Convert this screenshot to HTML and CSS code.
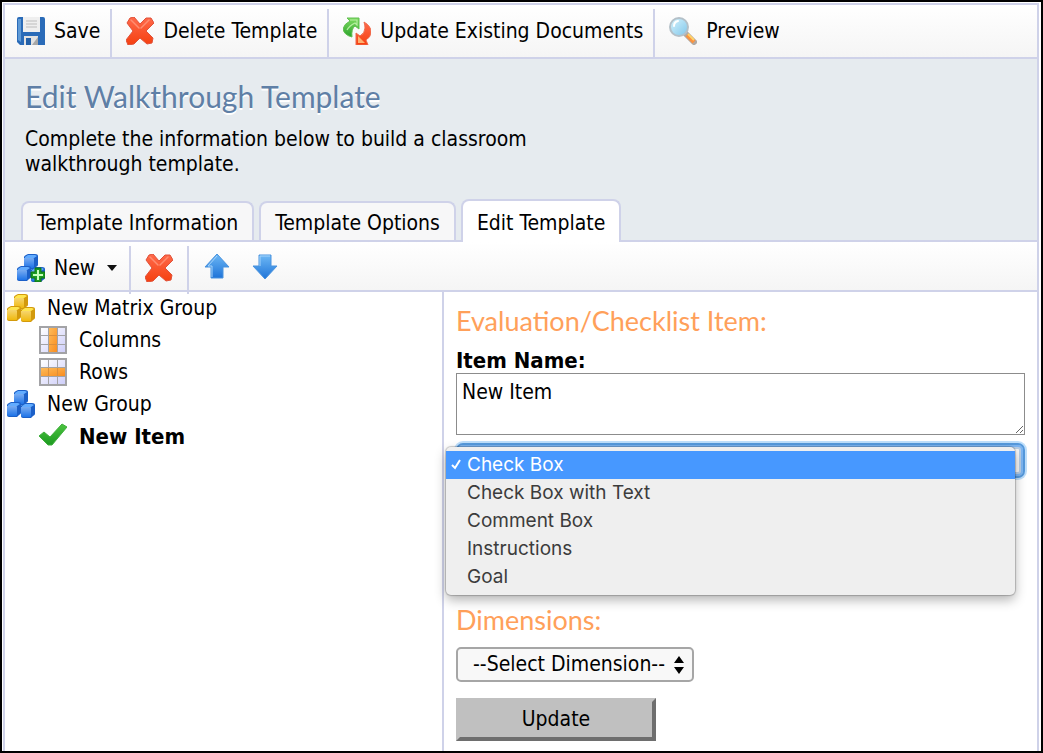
FILE: index.html
```
<!DOCTYPE html>
<html lang="en">
<head>
    <meta charset="UTF-8">
    <meta name="viewport" content="width=device-width, initial-scale=1.0">
    <title>Edit Walkthrough Template</title>
    <link rel="stylesheet" href="styles.css">
</head>

<body>
    <!-- shared gradients and icon shapes -->
    <svg class="defs" width="0" height="0" aria-hidden="true">
        <defs>
            <linearGradient id="red" x1="0" y1="0" x2="0" y2="1">
                <stop offset="0" stop-color="#ff6a4c"/>
                <stop offset="1" stop-color="#f5400f"/>
            </linearGradient>
            <linearGradient id="blue" x1="0" y1="0" x2="0" y2="1">
                <stop offset="0" stop-color="#6db8f5"/>
                <stop offset="1" stop-color="#1f74d8"/>
            </linearGradient>
            <linearGradient id="green" x1="0" y1="0" x2="0" y2="1">
                <stop offset="0" stop-color="#7fdc62"/>
                <stop offset="1" stop-color="#2ba32c"/>
            </linearGradient>
            <linearGradient id="tick" x1="0" y1="0" x2="0" y2="1">
                <stop offset="0" stop-color="#4cc440"/>
                <stop offset="1" stop-color="#1c9a20"/>
            </linearGradient>
            <linearGradient id="orange" x1="0" y1="0" x2="1" y2="1">
                <stop offset="0" stop-color="#fdbb5a"/>
                <stop offset="1" stop-color="#f98d20"/>
            </linearGradient>
            <linearGradient id="glass" x1="0" y1="0" x2="1" y2="1">
                <stop offset="0" stop-color="#d8f4fd"/>
                <stop offset="1" stop-color="#7fc6ea"/>
            </linearGradient>
            <linearGradient id="cell" x1="0" y1="0" x2="1" y2="1">
                <stop offset="0" stop-color="#ffffff"/>
                <stop offset="1" stop-color="#cfcffa"/>
            </linearGradient>
            <linearGradient id="shine" x1="0" y1="0" x2="0" y2="1">
                <stop offset="0" stop-color="#fff" stop-opacity="0.4"/>
                <stop offset="1" stop-color="#fff" stop-opacity="0"/>
            </linearGradient>
            <symbol id="icon-delete" viewBox="0 0 28 28">
                <path d="M4 1 8 0 14 7 20 1 25 1 28 6 20 14 27 21 26 26 21 27 14 21 8 27 2 28 0 23 7 14 1 6Z" fill="url(#red)" stroke="#e0523a" stroke-linejoin="round"/>
                <path d="M5 3 13 11M23 3 15 11" fill="none" stroke="#ff8d70" stroke-width="1.5" stroke-linecap="round"/>
            </symbol>
            <symbol id="cube" viewBox="0 0 15 15">
                <path class="cube-side" d="M1 3Q1 2 3 1L5 0H12Q15 0 15 2V11Q15 12 13 13L11 15H3Q1 15 1 13Z"/>
                <path class="cube-front" d="M1 4H10Q11 4 11 5V13Q11 14 10 14H3Q1 14 1 12Z"/>
                <path d="M1 4H10Q11 4 11 5V13Q11 14 10 14H3Q1 14 1 12Z" fill="url(#shine)"/>
                <path class="cube-top" d="M2 3 5 1H12L14 2 11 4H2Z"/>
            </symbol>
            <symbol id="icon-cubes" viewBox="0 0 28 28">
                <use href="#cube" x="6" y="0" width="15" height="15"/>
                <use href="#cube" x="-1" y="12" width="15" height="15"/>
                <use href="#cube" x="13" y="13" width="15" height="15"/>
            </symbol>
        </defs>
    </svg>

    <div class="app">
        <div class="toolbar main-toolbar">
            <button type="button" class="tool">
                <svg class="icon" viewBox="0 0 28 28" aria-hidden="true">
                    <path d="M0 2Q0 0 2 0H26Q28 0 28 2V28H3L0 25Z" fill="#2a6bb8"/>
                    <path d="M1 2H4V25L1 23Z" fill="#5f9ad6"/>
                    <path d="M6 0H23V15H6Z" fill="#efefef"/>
                    <path d="M9 4H20M9 7H20M9 10H20" stroke="#bdbdbd"/>
                    <path d="M7 19H21V28H7Z" fill="#e2e2e2"/>
                    <path d="M9 21H14V28H9Z" fill="#2360a8"/>
                    <path d="M15 28 21 20V28Z" fill="#a7a7a7"/>
                </svg>
                Save
            </button>
            <button type="button" class="tool">
                <svg class="icon" aria-hidden="true"><use href="#icon-delete"/></svg>
                Delete Template
            </button>
            <button type="button" class="tool">
                <svg class="icon" viewBox="0 0 28 28" aria-hidden="true">
                    <path d="M4 1H16V12L12 9Q8 12 9 20Q1 18 0 12Q1 7 7 4Z" fill="url(#green)" stroke="#63bf52"/>
                    <path d="M7 3H14V8L12 6Q6 9 4 13" fill="none" stroke="#b5efa0" stroke-width="1.2"/>
                    <path d="M21 5Q28 9 28 15Q28 20 23 23L25 28H13V16L17 19Q22 16 22 11Q22 8 21 5Z" fill="url(#red)" stroke="#ee6b4e"/>
                    <path d="M15 19V26H22L18 22Z" fill="#ffb070"/>
                </svg>
                Update Existing Documents
            </button>
            <button type="button" class="tool">
                <svg class="icon" viewBox="0 0 28 28" aria-hidden="true">
                    <path d="M17 17 25 25" stroke="#b0aaa4" stroke-width="6" stroke-linecap="round"/>
                    <path d="M18 18 25 25" stroke="#fb9340" stroke-width="4"/>
                    <path d="M19 17 25 23" stroke="#ffd26b" stroke-width="2"/>
                    <circle cx="10" cy="10" r="9" fill="url(#glass)" stroke="#b4c0c8" stroke-width="2"/>
                    <path d="M5 9Q5 5 9 4" fill="none" stroke="#fff" stroke-width="2" stroke-linecap="round"/>
                </svg>
                Preview
            </button>
        </div>

        <header class="page-header">
            <h1>Edit Walkthrough Template</h1>
            <p>Complete the information below to build a classroom walkthrough template.</p>
            <nav class="tabs">
                <a href="#information" class="tab">Template Information</a>
                <a href="#options" class="tab">Template Options</a>
                <a href="#edit" class="tab active" aria-current="page">Edit Template</a>
            </nav>
        </header>

        <div class="toolbar edit-toolbar">
            <button type="button" class="tool">
                <svg class="icon" viewBox="0 0 28 28" aria-hidden="true">
                    <use href="#icon-cubes" class="blue-cubes"/>
                    <path d="M18 14H24V18H28V24H24V28H18V24H14V18H18Z" fill="#1d9a24" stroke="#0b7413"/>
                    <path d="M21 16V26M16 21H26" stroke="#c9ffc0" stroke-width="2"/>
                </svg>
                New
                <span class="caret"></span>
            </button>
            <button type="button" class="tool" aria-label="Delete">
                <svg class="icon" aria-hidden="true"><use href="#icon-delete"/></svg>
            </button>
            <div class="arrows">
                <button type="button" class="arrow" aria-label="Move up">
                    <svg class="icon" viewBox="0 0 28 28" aria-hidden="true">
                        <path d="M14 2 26 15H20V26H8V15H2Z" fill="url(#blue)" stroke="#4a93de" stroke-linejoin="round"/>
                        <path d="M14 4 5 14H9V25" fill="none" stroke="#a5d4fb"/>
                    </svg>
                </button>
                <button type="button" class="arrow" aria-label="Move down">
                    <svg class="icon" viewBox="0 0 28 28" aria-hidden="true">
                        <path d="M14 27 2 14H8V3H20V14H26Z" fill="url(#blue)" stroke="#4a93de" stroke-linejoin="round"/>
                        <path d="M9 14V4H19" fill="none" stroke="#a5d4fb"/>
                    </svg>
                </button>
            </div>
        </div>

        <div class="content">
            <ul class="tree">
                <li class="node">
                    <svg class="icon gold-cubes" aria-hidden="true"><use href="#icon-cubes"/></svg>
                    New Matrix Group
                </li>
                <li class="node child">
                    <svg class="icon" viewBox="0 0 28 28" aria-hidden="true">
                        <path d="M0 0H28V28H0Z" fill="#a3a3a6"/>
                        <path d="M2 2H9V9H2ZM2 10H9V18H2ZM2 19H9V26H2ZM19 2H26V9H19ZM19 10H26V18H19ZM19 19H26V26H19Z" fill="url(#cell)"/>
                        <path d="M10 2H18V26H10Z" fill="url(#orange)"/>
                        <path d="M10 9.500H18M10 18.500H18" stroke="#dc8f3c"/>
                    </svg>
                    Columns
                </li>
                <li class="node child">
                    <svg class="icon" viewBox="0 0 28 28" aria-hidden="true">
                        <path d="M0 0H28V28H0Z" fill="#a3a3a6"/>
                        <path d="M2 2H9V9H2ZM10 2H18V9H10ZM19 2H26V9H19ZM2 19H9V26H2ZM10 19H18V26H10ZM19 19H26V26H19Z" fill="url(#cell)"/>
                        <path d="M2 10H26V18H2Z" fill="url(#orange)"/>
                        <path d="M9.500 10V18M18.500 10V18" stroke="#dc8f3c"/>
                    </svg>
                    Rows
                </li>
                <li class="node">
                    <svg class="icon blue-cubes" aria-hidden="true"><use href="#icon-cubes"/></svg>
                    New Group
                </li>
                <li class="node child selected">
                    <svg class="icon" viewBox="0 0 28 28" aria-hidden="true">
                        <path d="M0 14 5 10 11 15 23 2 28 5 13 23H9Z" fill="url(#tick)" stroke="#3fae3c" stroke-linejoin="round"/>
                    </svg>
                    New Item
                </li>
            </ul>

            <form class="editor">
                <h2>Evaluation/Checklist Item:</h2>
                <label for="itemName">Item Name:</label>
                <textarea id="itemName" rows="2">New Item</textarea>

                <div class="type-picker">
                    <select id="itemType" class="type-select" aria-label="Item type">
                        <option>Check Box</option>
                    </select>
                    <div class="menu" role="listbox" aria-label="Item types">
                        <button type="button" class="option chosen" role="option" aria-selected="true">
                            <svg class="check" viewBox="0 0 12 12" aria-hidden="true">
                                <path d="M2 7 5 10 10 2" fill="none" stroke="#fff" stroke-width="2"/>
                            </svg>
                            Check Box
                        </button>
                        <button type="button" class="option" role="option">Check Box with Text</button>
                        <button type="button" class="option" role="option">Comment Box</button>
                        <button type="button" class="option" role="option">Instructions</button>
                        <button type="button" class="option" role="option">Goal</button>
                    </div>
                </div>

                <h2>Dimensions:</h2>
                <div class="dimension">
                    <select id="dimension" aria-label="Dimension">
                        <option>--Select Dimension--</option>
                    </select>
                    <svg class="updown" viewBox="0 0 10 20" aria-hidden="true">
                        <path d="M5 1 10 8H0ZM5 19 0 12H10Z"/>
                    </svg>
                </div>
                <button type="button" class="update">Update</button>
            </form>
        </div>
    </div>
</body>

</html>
```
FILE: styles.css
```
* {
    box-sizing: border-box;
}

body {
    display: flex;
    margin: 0;
    min-height: 100vh;
    padding: 1px 2px 0 1px;
    border: 2px solid #000;
    background: #fff;
    color: #000;
    font-family: "DejaVu Sans Condensed", "Noto Sans", sans-serif;
    font-size: 21px;
    line-height: 25px;
}

button,
select,
textarea {
    font: inherit;
    color: inherit;
}

.defs {
    position: absolute;
}

.app {
    display: flex;
    flex-direction: column;
    flex: 1;
    min-width: 0;
    border: 2px solid #cfd2e9;
    border-bottom: none;
}

.icon {
    width: 28px;
    height: 28px;
    flex: none;
}

/* toolbars */
.toolbar {
    display: flex;
    background: linear-gradient(#fff, #f5f5f5);
    border-bottom: 2px solid #cfd2e9;
}

.main-toolbar {
    height: 54px;
    padding-top: 4px;
}

.edit-toolbar {
    height: 50px;
    padding-top: 4px;
}

.tool {
    display: flex;
    align-items: center;
    gap: 9px;
    padding: 0 10px 0 14px;
    border: none;
    border-right: 2px solid #cfd2e9;
    background: none;
    white-space: nowrap;
    cursor: pointer;
}

.tool:first-child {
    padding-left: 12px;
}

.main-toolbar .tool {
    padding-bottom: 4px;
}

.main-toolbar .tool:last-child {
    border-right: none;
}

.edit-toolbar .tool {
    height: 48px;
    padding-right: 14px;
    padding-bottom: 4px;
}

.edit-toolbar .tool:first-child {
    padding-right: 12px;
}

.caret {
    margin-left: 3px;
    border: 5px solid transparent;
    border-top: 6px solid #111;
    border-bottom: none;
}

.arrows {
    display: flex;
    align-items: center;
    gap: 20px;
    padding: 0 14px 4px;
}

.arrow {
    display: flex;
    padding: 0;
    border: none;
    background: none;
    cursor: pointer;
}

/* header */
.page-header {
    padding: 20px 16px 0;
    background: #e6ebef;
    border-bottom: 2px solid #cfd2e9;
}

h1 {
    margin: 0 0 14px;
    padding-left: 4px;
    color: #5f7fa6;
    font-family: Lato, sans-serif;
    font-size: 30px;
    font-weight: 400;
    line-height: 34px;
    text-shadow: 0 2px 0 #fff;
}

.page-header p {
    max-width: 540px;
    margin: 0 0 22px;
    padding-left: 4px;
}

.tabs {
    display: flex;
    align-items: flex-end;
    gap: 5px;
}

.tab {
    padding: 8px 14px 4px;
    background: #f7f7f8;
    border: 2px solid #cfd2e9;
    border-bottom: none;
    border-radius: 8px 8px 0 0;
    color: #000;
    text-decoration: none;
    white-space: nowrap;
}

.tab.active {
    margin-bottom: -2px;
    padding: 10px 14px 6px;
    background: #fff;
}

/* content */
.content {
    display: flex;
    flex: 1;
}

.tree {
    flex: 0 1 439px;
    margin: 0;
    padding: 0 0 0 2px;
    border-right: 2px solid #cfd2e9;
    list-style: none;
}

.node {
    display: flex;
    align-items: center;
    gap: 12px;
    height: 32px;
}

.node.child {
    padding-left: 32px;
}

.node.selected {
    font-size: 22px;
    font-weight: 700;
}

.gold-cubes {
    --top: #ffe650;
    --front: #f0b90e;
    --side: #d39a0c;
}

.blue-cubes {
    --top: #62acff;
    --front: #1f74e8;
    --side: #1c60c8;
}

.cube-top {
    fill: var(--top);
}

.cube-front {
    fill: var(--front);
}

.cube-side {
    fill: var(--side);
}

/* editor */
.editor {
    flex: 1;
    min-width: 0;
    padding: 13px 12px 10px;
}

h2 {
    margin: 0;
    color: #ffa05a;
    font-family: Lato, sans-serif;
    font-size: 27px;
    font-weight: 400;
    line-height: 32px;
}

.editor label {
    display: block;
    margin-top: 11px;
    font-size: 22px;
    font-weight: 700;
}

.editor textarea {
    display: block;
    width: 100%;
    height: 62px;
    padding: 6px 5px;
    border: 1px solid #8c8c8c;
    background: #fff;
    resize: both;
}

.type-picker {
    position: relative;
    margin: 8px 0 126px;
}

.type-select {
    display: block;
    width: 100%;
    height: 35px;
    appearance: none;
    border: 2px solid #5599dc;
    border-radius: 7px;
    background: #f7f7f7;
    box-shadow: 0 0 0 2px #bfdffb, inset 0 0 0 2px #7db6f3, inset 0 0 0 4px #b9cfe6;
    outline: none;
}

.menu {
    position: absolute;
    top: 4px;
    left: -10px;
    right: 10px;
    padding: 4px 0;
    border-radius: 5px;
    background: #efefef;
    box-shadow: 0 0 1px 1px rgba(0, 0, 0, 0.2), 0 5px 12px rgba(0, 0, 0, 0.3);
    font-family: Inter, sans-serif;
    font-size: 19px;
    color: #3c3c3c;
}

.option {
    display: flex;
    align-items: center;
    width: 100%;
    height: 28px;
    padding: 0 0 2px 21px;
    border: none;
    background: none;
    text-align: left;
}

.option.chosen {
    gap: 5px;
    padding-left: 4px;
    background: #4798ff;
    color: #fff;
}

.check {
    width: 12px;
    height: 12px;
}

.dimension {
    position: relative;
    width: fit-content;
    margin-top: 11px;
}

.dimension select {
    display: block;
    height: 35px;
    padding: 0 26px 0 15px;
    appearance: none;
    border: 2px solid #a6a6a6;
    border-radius: 5px;
    background: #f8f8f8;
}

.updown {
    position: absolute;
    top: 8px;
    right: 10px;
    width: 10px;
    height: 20px;
    pointer-events: none;
}

.update {
    display: block;
    width: 200px;
    height: 43px;
    margin-top: 16px;
    padding: 0;
    border: 4px solid;
    border-color: #c0c0c0 #6e6e6e #6e6e6e #c0c0c0;
    background: #c0c0c0;
    cursor: pointer;
}
```
